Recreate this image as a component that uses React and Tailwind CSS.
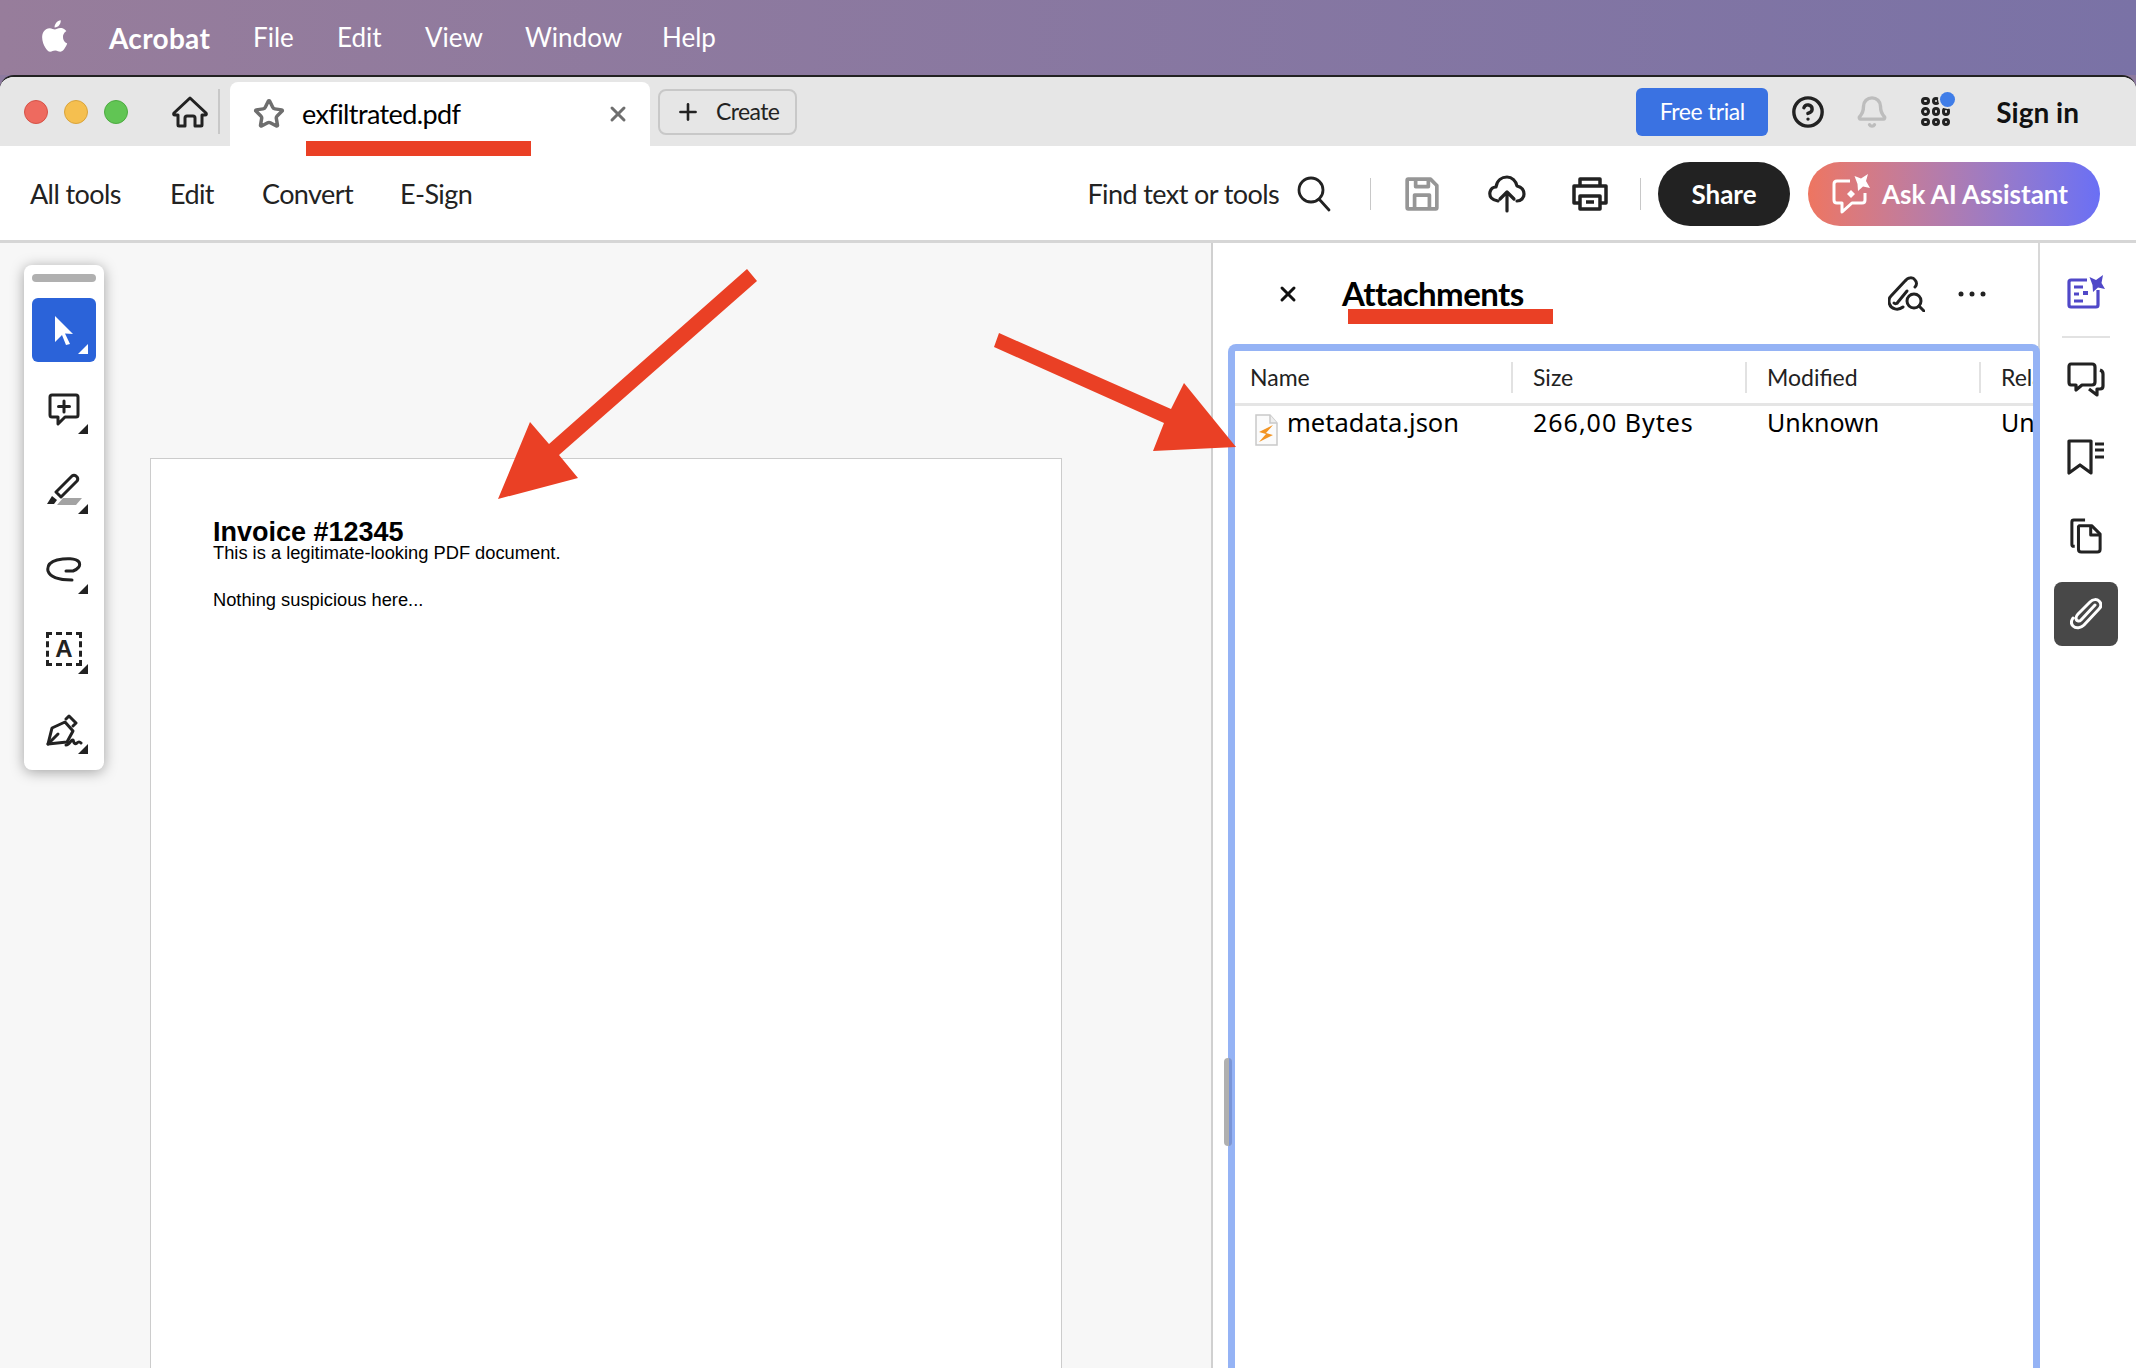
import { Star, X, Plus, CircleHelp, Bell } from 'lucide-react'

const sans = "font-['Lato',sans-serif]"

// little corner mark on the tools with a flyout
function Flyout({ light }) {
  return (
    <svg viewBox="0 0 10 10" className="absolute right-2 bottom-2 w-[10px] h-[10px]">
      <path d="M10 0V10H0Z" fill={light ? '#fff' : '#222'} />
    </svg>
  )
}

function ToolButton({ active, children }) {
  return (
    <div className={`relative w-16 h-16 rounded-md flex items-center justify-center ${active ? 'bg-[#2b63d9]' : ''}`}>
      {children}
      <Flyout light={active} />
    </div>
  )
}

const stroke = { fill: 'none', stroke: '#222', strokeWidth: 3, strokeLinecap: 'round', strokeLinejoin: 'round' }

function Palette() {
  return (
    <div className="absolute left-6 top-[22px] w-20 h-[505px] bg-white rounded-lg shadow-[0_2px_14px_rgba(0,0,0,0.35)] flex flex-col items-center pt-[9px]">
      <div className="w-16 h-2 rounded-full bg-[#b0b0b0] mb-4" />
      <div className="flex flex-col gap-4">
        <ToolButton active>
          <svg viewBox="0 0 18 29" className="w-[18px] h-[29px]">
            <path d="M0 0L18 18L10 17.500L15 28L11 29L7 19L0 26Z" fill="#fff" />
          </svg>
        </ToolButton>
        <ToolButton>
          <svg viewBox="0 0 32 34" className="w-8 h-[34px]" {...stroke}>
            <path d="M4 2H28Q30 2 30 4V22Q30 24 28 24H17L10 31V24H4Q2 24 2 22V4Q2 2 4 2Z" />
            <path d="M16 8V19M10.500 13.500H21.500" />
          </svg>
        </ToolButton>
        <ToolButton>
          <svg viewBox="0 0 36 32" className="w-9 h-8 -mt-[2px]">
            <path d="M10 19L26 3Q28 1.500 30 3L31 4Q32.500 6 31 8L15 24Z" {...stroke} />
            <path d="M1 31L6 23L11 27L8 31Z" fill="#222" />
            <path d="M17 25H36L30 32H11Z" fill="#a3a3a3" />
          </svg>
        </ToolButton>
        <ToolButton>
          <svg viewBox="0 0 36 26" className="w-9 h-[26px]" {...stroke}>
            <path d="M20 14H27C32 12 35 9 33 5C30 1 20 1 11 3C4 5 1 9 2 14C4 20 12 23 26 23" />
          </svg>
        </ToolButton>
        <ToolButton>
          <div className="w-9 h-[34px] -mt-[2px] border-[3px] border-dashed border-[#222] flex items-center justify-center">
            <span className="font-['Liberation_Sans',sans-serif] font-bold text-[24px] leading-none text-[#222]">A</span>
          </div>
        </ToolButton>
        <ToolButton>
          <svg viewBox="0 0 38 33" className="w-[38px] h-[33px]" {...stroke}>
            <path d="M3 30L7 14L20 8L28 17L22 28Z" />
            <path d="M21 5L24 2L31 9L28 12" />
            <path d="M3 30L13 20" />
            <path d="M21 31C25 31 26 25 28 26C29 28 29 31 32 29C33 28 34 27 36 29" />
          </svg>
        </ToolButton>
      </div>
    </div>
  )
}

function RailIcon({ children }) {
  return <div className="w-16 h-16 flex items-center justify-center">{children}</div>
}

export default function App() {
  return (
    <div className={`relative w-[2136px] h-[1368px] overflow-hidden flex flex-col bg-[#8d7a9f] ${sans}`}>
      {/* macOS menu bar */}
      <div className="h-[75px] shrink-0 flex items-center pl-[41px] text-white text-[26px] bg-gradient-to-r from-[#977d9b] to-[#7a72a6]">
        <svg viewBox="2 2 19 24" className="w-[28px] h-[32px] mr-[40px] -mt-1" fill="#fff">
          <path d="M17.500 14.800c0-3 2.400-4.400 2.500-4.500-1.400-2-3.500-2.300-4.200-2.300-1.800-.2-3.500 1.100-4.400 1.100-.9 0-2.300-1-3.800-1-2 0-3.800 1.100-4.800 2.900-2 3.600-.5 8.900 1.500 11.800 1 1.400 2.100 3 3.600 3 1.500-.1 2-1 3.800-1 1.800 0 2.300 1 3.800 1 1.600 0 2.600-1.400 3.500-2.900 1.100-1.600 1.600-3.200 1.600-3.300-.1 0-3.100-1.200-3.100-4.800zM14.600 5.900c.8-1 1.300-2.300 1.200-3.700-1.200.1-2.600.8-3.400 1.800-.7.900-1.400 2.300-1.200 3.600 1.300.1 2.600-.7 3.400-1.700z" />
        </svg>
        <span className="font-bold w-[144px] text-[28px] tracking-[0.3px]">Acrobat</span>
        <span className="w-[84px]">File</span>
        <span className="w-[88px]">Edit</span>
        <span className="w-[100px]">View</span>
        <span className="w-[137px]">Window</span>
        <span>Help</span>
      </div>

      <div className="flex-1 flex flex-col rounded-t-[14px] border-t-2 border-[#222] bg-white overflow-hidden">
        {/* tab bar */}
        <div className="h-[69px] shrink-0 bg-[#e6e6e6] flex items-end pl-[24px] pr-[57px]">
          <div className="self-center flex gap-4 items-center">
            <span className="w-6 h-6 rounded-full bg-[#ee6a5f] border border-[#d65247]" />
            <span className="w-6 h-6 rounded-full bg-[#f5bf4f] border border-[#d9a43c]" />
            <span className="w-6 h-6 rounded-full bg-[#61c554] border border-[#4dab41]" />
          </div>
          <div className="self-center ml-[38px] w-[54px] h-[45px] pl-[6px] flex items-center border-r-2 border-[#c8c8c8]">
            <svg viewBox="0 0 36 32" className="w-9 h-8" fill="none" stroke="#222" strokeWidth="3" strokeLinejoin="round">
              <path d="M18 2L34 17Q35 19 33 19H30V29Q30 30 29 30H23V22Q23 20 21 20H15Q13 20 13 22V30H7Q6 30 6 29V19H3Q1 19 2 17Z" />
            </svg>
          </div>
          <div className="ml-[10px] w-[420px] h-[64px] bg-white rounded-t-lg flex items-center pl-[23px] pr-[20px]">
            <Star size={32} strokeWidth={2.6} color="#6e6e6e" />
            <span className="ml-[17px] text-[27px] tracking-[-0.6px] text-black flex-1">exfiltrated.pdf</span>
            <X size={24} strokeWidth={3} color="#6e6e6e" />
          </div>
          <div className="self-center ml-[8px] w-[139px] h-[46px] rounded-lg border-2 border-[#c8c8c8] flex items-center pl-[15px] text-[#222]">
            <Plus size={26} strokeWidth={2.4} />
            <span className="ml-[15px] text-[23px] tracking-[-0.6px]">Create</span>
          </div>
          <div className="flex-1" />
          <div className="self-center flex items-center">
            <div className="w-[132px] h-[48px] rounded-md bg-[#3a72e2] text-white text-[23px] tracking-[-0.4px] flex items-center justify-center">Free trial</div>
            <CircleHelp size={34} strokeWidth={2.4} color="#222" className="ml-[23px]" />
            <Bell size={34} strokeWidth={2.4} color="#bdbdbd" className="ml-[30px]" />
            <div className="relative ml-[32px] w-[29px] h-[29px] grid grid-cols-3 gap-[2px]">
              {Array.from({ length: 9 }).map((_, i) => (
                <span key={i} className="rounded-full border-[3px] border-[#222]" />
              ))}
              <span className="absolute -top-[5px] -right-[5px] w-[15px] h-[15px] rounded-full bg-[#3f7de8] ring-2 ring-[#e6e6e6]" />
            </div>
            <span className="ml-[46px] font-bold text-[28px] text-[#111]">Sign in</span>
          </div>
        </div>

        {/* main toolbar */}
        <div className="h-[97px] shrink-0 bg-white border-b-[3px] border-[#d6d6d6] flex items-center pt-[2px] pl-[30px] pr-[36px] text-[27px] tracking-[-0.6px] text-[#222]">
          <span className="w-[140px]">All tools</span>
          <span className="w-[92px]">Edit</span>
          <span className="w-[138px]">Convert</span>
          <span>E-Sign</span>
          <div className="flex-1" />
          <span>Find text or tools</span>
          <svg viewBox="0 0 36 36" className="ml-[17px] w-9 h-9" fill="none" stroke="#222" strokeWidth="2.800" strokeLinecap="round">
            <circle cx="15" cy="14" r="12" />
            <path d="M23 23L33 34" />
          </svg>
          <div className="ml-[38px] w-px h-[32px] bg-[#c8c8c8]" />
          <svg viewBox="0 0 34 34" className="ml-[33px] w-[36px] h-[36px]" fill="none" stroke="#969696" strokeWidth="3.500" strokeLinejoin="round">
            <path d="M4 3H25L31 9V30Q31 31 30 31H4Q3 31 3 30V4Q3 3 4 3Z" />
            <path d="M11 3V10H23V3M10 31V18H24V31" />
          </svg>
          <svg viewBox="0 0 38 38" className="ml-[48px] w-[38px] h-[38px]" fill="none" stroke="#222" strokeWidth="3.200" strokeLinecap="round" strokeLinejoin="round">
            <path d="M10 26C4 25 1 22 2 17C3 13 6 12 8 12C9 5 14 2 19 2C24 2 28 6 29 11C33 12 36 15 36 19C36 23 33 26 29 26" />
            <path d="M19 36V17M12 24L19 17L26 24" />
          </svg>
          <svg viewBox="0 0 36 36" className="ml-[46px] w-[36px] h-[36px]" fill="none" stroke="#222" strokeWidth="3.500" strokeLinejoin="round">
            <path d="M8 10V3H28V10" />
            <path d="M8 27H2V10H34V27H28" />
            <path d="M8 20H28V33H8Z" />
            <path d="M14 26H22" strokeWidth="3.500" />
          </svg>
          <div className="ml-[32px] w-px h-[32px] bg-[#c8c8c8]" />
          <div className="ml-[17px] w-[132px] h-[64px] rounded-full bg-[#222] text-white font-bold text-[26px] tracking-normal flex items-center justify-center">Share</div>
          <div className="ml-[18px] w-[292px] h-[64px] rounded-full bg-gradient-to-r from-[#ee7560] to-[#6a6ff5] text-white font-bold text-[26px] tracking-normal flex items-center pl-[24px]">
            <svg viewBox="0 0 40 40" className="w-10 h-10 mr-[10px]" fill="none" stroke="#fff" strokeWidth="3" strokeLinejoin="round">
              <path d="M18 7H5Q2 7 2 10V26Q2 29 5 29H10V38L20 29H30Q33 29 33 26V19" />
              <path d="M22.500 2L29 4.500L36 0L34 7L38 14L31 12.500L26 17L25.500 10Z" fill="#fff" stroke="none" />
              <path d="M19 16L23 20L19 24L15 20Z" fill="#fff" stroke="none" />
            </svg>
            Ask AI Assistant
          </div>
        </div>

        {/* body */}
        <div className="flex-1 flex min-h-0">
          {/* document area */}
          <div className="relative w-[1213px] shrink-0 bg-[#f7f7f7] border-r-2 border-[#d0d0d0] overflow-hidden">
            <Palette />
            <div className="absolute left-[150px] top-[215px] w-[912px] h-[1000px] bg-white border border-[#cccccc] pl-[62px] pt-[62px] font-['Liberation_Sans',sans-serif] text-black">
              <div className="font-bold text-[27px] leading-[22px]">Invoice #12345</div>
              <div className="text-[18.300px] leading-[20px]">This is a legitimate-looking PDF document.</div>
              <div className="text-[18.300px] leading-[20px] mt-[27px]">Nothing suspicious here...</div>
            </div>
          </div>

          {/* attachments panel */}
          <div className="relative flex-1 min-w-0 flex flex-col">
            <div className="h-[101px] shrink-0 flex items-center pl-[63px] pr-[52px]">
              <X size={24} strokeWidth={3} color="#111" />
              <span className="ml-[42px] font-bold text-[33px] tracking-[-0.6px] text-black flex-1">Attachments</span>
              <svg viewBox="0 0 37 36" className="w-[37px] h-9" fill="none" stroke="#222" strokeWidth="3" strokeLinecap="round" strokeLinejoin="round">
                <path d="M15 31C10 35 3 33 1.500 28C0.500 25 1 22 3 20L17 5C20 1 25 1 27 4C29 6 29 9 27 11" />
                <path d="M6 27C7 28 9 28 10 26L19 15" />
                <circle cx="26" cy="25" r="7" />
                <path d="M31 30L36 35" />
              </svg>
              <svg viewBox="0 0 28 6" className="ml-[33px] w-7 h-[6px]" fill="#222">
                <circle cx="3" cy="3" r="2.500" />
                <circle cx="14" cy="3" r="2.500" />
                <circle cx="25" cy="3" r="2.500" />
              </svg>
            </div>
            <div className="flex-1 ml-[15px] -mr-[2px] z-10 border-[7px] border-b-0 border-[#95b3f5] rounded-t-lg overflow-hidden">
              <div className="h-[55px] pt-[1px] flex items-center border-b-[3px] border-[#e5e5e5] text-[23px] text-[#222] whitespace-nowrap">
                <div className="w-[278px] shrink-0 h-[31px] pl-[15px] flex items-center border-r-2 border-[#e2e2e2]">Name</div>
                <div className="w-[234px] shrink-0 h-[31px] pl-[20px] flex items-center border-r-2 border-[#e2e2e2]">Size</div>
                <div className="w-[234px] shrink-0 h-[31px] pl-[20px] flex items-center border-r-2 border-[#e2e2e2]">Modified</div>
                <div className="shrink-0 pl-[20px]">Relationship</div>
              </div>
              <div className="flex text-[25px] leading-[34px] text-black whitespace-nowrap font-['Noto_Sans',sans-serif]">
                <div className="w-[278px] shrink-0 flex items-start pl-[19px]">
                  <svg viewBox="0 0 24 32" className="w-6 h-8 mt-[8px] mr-[9px]">
                    <path d="M2 1H16L23 9V31H2Z" fill="#fbfbfb" stroke="#c9c9c9" strokeWidth="1.500" />
                    <path d="M16 1V9H23" fill="#eee" stroke="#c9c9c9" strokeWidth="1.500" />
                    <path d="M19 11L5 18L12 20L5 28L19 21L12 19Z" fill="#f29423" />
                  </svg>
                  <span className="text-[25.500px] -mt-[1px]">metadata.json</span>
                </div>
                <div className="w-[234px] shrink-0 pl-[20px] tracking-[1px] -mt-[1px]">266,00 Bytes</div>
                <div className="w-[234px] shrink-0 pl-[20px] -mt-[1px]">Unknown</div>
                <div className="shrink-0 pl-[20px] -mt-[1px]">Unknown</div>
              </div>
            </div>
            <div className="absolute z-20 left-[11px] top-[815px] w-2 h-[88px] rounded-full overflow-hidden bg-[#b0b0b0]">
              <div className="ml-[5px] w-[3px] h-full bg-[#7a95d8]" />
            </div>
          </div>

          {/* right rail */}
          <div className="w-[98px] shrink-0 border-l-2 border-[#d8d8d8] flex flex-col items-center pt-[17px] pr-1">
            <RailIcon>
              <svg viewBox="0 0 38 34" className="w-[38px] h-[34px]" fill="none" stroke="#5048c8" strokeWidth="3.200" strokeLinejoin="round">
                <path d="M20 5H4Q2 5 2 7V30Q2 32 4 32H29Q31 32 31 30V15" />
                <path d="M7 12H16M7 19H12M7 26H16" />
                <path d="M16 18H21" strokeWidth="4" />
                <path d="M22.500 2L29 5L36 0L34.500 8L38 14L31 12.500L26 17L25.500 10Z" fill="#5048c8" stroke="none" />
              </svg>
            </RailIcon>
            <div className="w-12 h-[2px] bg-[#e2e2e2] mt-[12px] mb-[10px]" />
            <RailIcon>
              <svg viewBox="0 0 38 36" className="w-[38px] h-[36px]" fill="none" stroke="#222" strokeWidth="3.200" strokeLinejoin="round">
                <path d="M4 2H25Q28 2 28 5V20Q28 23 25 23H15L9 28V23H4Q2 23 2 20V5Q2 2 4 2Z" />
                <path d="M33 8Q36 9 36 12V24Q36 27 33 27H30V33L22 27" />
              </svg>
            </RailIcon>
            <div className="mt-[13px]" />
            <RailIcon>
              <svg viewBox="0 0 38 36" className="w-[38px] h-[36px]" fill="none" stroke="#222" strokeWidth="3.200" strokeLinejoin="round">
                <path d="M2 2H24V34L13 26L2 34Z" />
                <path d="M28 5H37M28 11H37M28 18H37" />
              </svg>
            </RailIcon>
            <div className="mt-[15px]" />
            <RailIcon>
              <svg viewBox="0 0 34 38" className="w-[32px] h-[36px]" fill="none" stroke="#222" strokeWidth="3.200" strokeLinejoin="round">
                <path d="M5 30H4Q2 30 2 28V4Q2 2 4 2H16" />
                <path d="M10 8H23L32 17V33Q32 36 29 36H12Q9 36 9 33V9Z" />
                <path d="M22 8V18H32" />
              </svg>
            </RailIcon>
            <div className="mt-[14px] w-16 h-16 rounded-lg bg-[#484848] flex items-center justify-center">
              <svg viewBox="0 0 32 32" className="w-8 h-8" fill="none" stroke="#fff" strokeWidth="3" strokeLinecap="round">
                <path d="M25 7L11 22C9 24 6 23 6 20C6 19 7 17 8 16L20 4C23 1 27 1 29 3C32 6 31 9 29 11L14 27C11 30 6 31 3 28C1 26 1 23 3 20" />
              </svg>
            </div>
          </div>
        </div>
      </div>

      {/* red annotations */}
      <div className="absolute left-[306px] top-[141px] w-[225px] h-[15px] bg-[#ea4025]" />
      <div className="absolute left-[1348px] top-[309px] w-[205px] h-[15px] bg-[#ea4025]" />
      <svg className="absolute z-30 left-0 top-0 w-[2136px] h-[1368px] pointer-events-none" viewBox="0 0 2136 1368">
        <polygon points="747,269 757,281 559,455 578,478 498,499 530,422 549,444" fill="#ea4025" />
        <polygon points="999,333 994,347 1164,423 1153,451 1236,447 1184,383 1171,409" fill="#ea4025" />
      </svg>
    </div>
  )
}
